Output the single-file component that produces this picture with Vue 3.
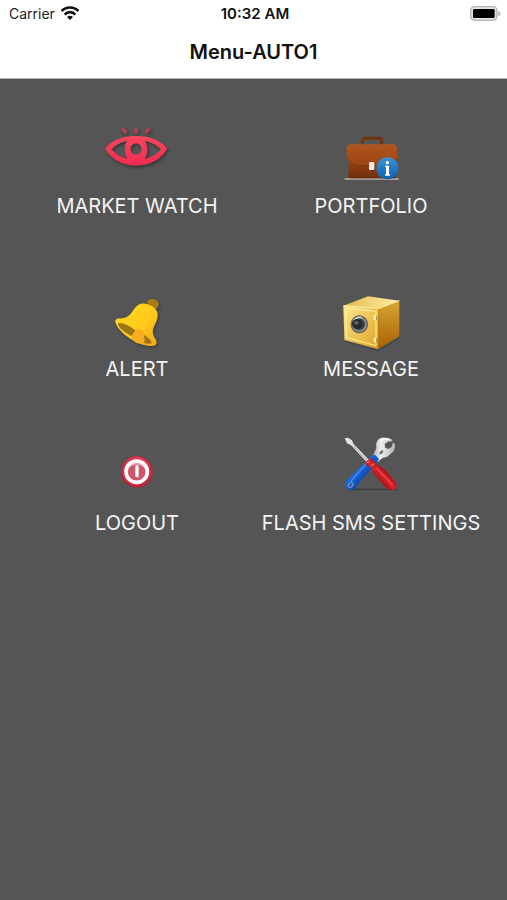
<template>
  <div class="screen">
    <header class="top-bar">
      <div class="status-bar">
        <div class="carrier">
          <span>Carrier</span>
          <svg class="wifi" viewBox="0 0 54 42" aria-hidden="true">
            <g fill="none" stroke="#111" stroke-width="8">
              <path d="M2 15 C15 1 39 1 52 15" />
              <path d="M11 26 C20 16 34 16 43 26" />
            </g>
            <path d="M18 33 Q27 25 36 33 L27 42 Z" fill="#111" />
          </svg>
        </div>
        <span class="clock">10:32 AM</span>
        <svg class="battery" viewBox="0 0 93 45" aria-hidden="true">
          <rect x="2" y="2" width="79" height="41" rx="12" fill="#e4e4e4" stroke="#b4b4b4" stroke-width="4" />
          <rect x="9" y="9" width="65" height="27" rx="4" fill="#000" />
          <path d="M85 15 Q92 18 92 23 Q92 28 85 31 Z" fill="#b4b4b4" />
        </svg>
      </div>
      <h1 class="title">{{ title }}</h1>
    </header>

    <main class="menu">
      <button v-for="item in items" :key="item.id" type="button" class="menu-item">
        <!-- eye -->
        <svg v-if="item.id === 'watch'" class="icon" viewBox="-3 15 252 216" aria-hidden="true">
          <defs>
            <linearGradient id="eye-red" x1="0" y1="0" x2="0" y2="1">
              <stop offset="0" stop-color="#fa465e" />
              <stop offset="1" stop-color="#f02b50" />
            </linearGradient>
            <filter id="eye-shadow" x="-20%" y="-20%" width="140%" height="150%">
              <feDropShadow dx="4" dy="6" stdDeviation="4" flood-color="#222" flood-opacity="0.6" />
            </filter>
          </defs>
          <g filter="url(#eye-shadow)">
            <path
              fill="url(#eye-red)"
              fill-rule="evenodd"
              d="M28 101 C44 77 78 63 120 63 C162 63 196 77 213 101 C196 133 160 151 120 151 C80 151 46 133 28 101 Z
                 M47 103 C57 117 73 127 94 132 C84 114 84 93 94 77 C74 81 57 90 47 103 Z
                 M146 77 C156 93 156 114 146 132 C167 127 185 117 195 103 C185 90 166 81 146 77 Z
                 M120 85 A17 17 0 1 0 120 119 A17 17 0 1 0 120 85 Z"
            />
            <g stroke="#cf3850" stroke-width="8">
              <path d="M79 39 L90 54" />
              <path d="M120 40 V55" />
              <path d="M160 39 L149 54" />
            </g>
          </g>
        </svg>

        <!-- briefcase with info badge -->
        <svg v-else-if="item.id === 'portfolio'" class="icon" viewBox="-4 -15 252 216" aria-hidden="true">
          <defs>
            <linearGradient id="case-body" x1="0" y1="0" x2="0" y2="1">
              <stop offset="0" stop-color="#9c4612" />
              <stop offset="1" stop-color="#702d0c" />
            </linearGradient>
            <linearGradient id="case-flap" x1="0" y1="0" x2="0" y2="1">
              <stop offset="0" stop-color="#b0561f" />
              <stop offset="1" stop-color="#9c4411" />
            </linearGradient>
            <linearGradient id="badge-blue" x1="0" y1="0" x2="0" y2="1">
              <stop offset="0" stop-color="#3a92d4" />
              <stop offset="1" stop-color="#0c61ad" />
            </linearGradient>
          </defs>
          <rect x="42" y="159" width="164" height="6" rx="3" fill="#a09c9a" />
          <path d="M97 60 V48 Q97 40 106 40 H144 Q154 40 154 48 V60" fill="none" stroke="#75330f" stroke-width="9" />
          <path d="M56 100 H196 V156 Q196 160 190 160 H60 Q54 160 54 154 Z" fill="url(#case-body)" />
          <path
            d="M62 58 H188 Q200 58 200 70 V100 Q196 118 174 121 H78 Q56 116 49 98 V70 Q50 58 62 58 Z"
            fill="url(#case-flap)"
          />
          <path d="M51 100 Q60 117 78 122 H174 Q194 118 199 102" fill="none" stroke="#803509" stroke-width="2" />
          <rect x="116" y="111" width="16" height="24" rx="3" fill="#f1e7e1" />
          <circle cx="171" cy="130" r="33" fill="url(#badge-blue)" />
          <circle cx="171" cy="113" r="5" fill="#fff" />
          <path d="M164 122 H176 V148 H179 V152 H164 V148 H167 V126 H164 Z" fill="#fff" />
        </svg>

        <!-- bell -->
        <svg v-else-if="item.id === 'alert'" class="icon" viewBox="-3 -15 252 216" aria-hidden="true">
          <defs>
            <linearGradient id="bell-gold" x1="0" y1="0" x2="1" y2="1">
              <stop offset="0" stop-color="#ffdc1c" />
              <stop offset="0.6" stop-color="#ffc91c" />
              <stop offset="1" stop-color="#f0a31c" />
            </linearGradient>
            <filter id="bell-shadow" x="-20%" y="-20%" width="140%" height="140%">
              <feDropShadow dx="3" dy="4" stdDeviation="4" flood-color="#222" flood-opacity="0.5" />
            </filter>
          </defs>
          <g filter="url(#bell-shadow)">
            <path d="M153 43 Q158 31 172 33 Q186 36 188 47 Q188 57 179 63 L158 55 Z" fill="#a87c12" />
            <path
              d="M58 97 C62 91 72 92 80 91 C99 89 106 75 116 61 C126 47 140 44 155 49 C176 56 188 69 184 89
                 C181 107 167 118 171 137 C173 149 184 156 181 167 C175 178 153 174 133 167 C104 157 57 123 58 97 Z"
              fill="url(#bell-gold)"
            />
            <path d="M66 106 C75 101 102 113 118 127 L111 146 C91 138 64 119 66 106 Z" fill="#9c7714" />
            <path d="M139 139 C153 145 166 157 167 165 C161 169 147 166 136 162 Z" fill="#997313" />
            <path
              d="M119 126 C130 118 145 127 144 140 C143 148 150 157 143 164 C134 171 114 164 108 152 C104 142 111 137 119 126 Z"
              fill="#f6ad20"
            />
          </g>
        </svg>

        <!-- safe -->
        <svg v-else-if="item.id === 'message'" class="icon" viewBox="-4 -15 252 216" aria-hidden="true">
          <defs>
            <linearGradient id="safe-front" x1="0" y1="0" x2="1" y2="1">
              <stop offset="0" stop-color="#ffe78d" />
              <stop offset="0.4" stop-color="#f1cc60" />
              <stop offset="1" stop-color="#e0a321" />
            </linearGradient>
            <linearGradient id="safe-side" x1="0" y1="0" x2="0" y2="1">
              <stop offset="0" stop-color="#d9a632" />
              <stop offset="1" stop-color="#a86105" />
            </linearGradient>
            <linearGradient id="safe-top" x1="0" y1="0" x2="1" y2="0">
              <stop offset="0" stop-color="#e3b949" />
              <stop offset="1" stop-color="#fff0a8" />
            </linearGradient>
            <radialGradient id="safe-dial" cx="0.5" cy="0.5" r="0.5">
              <stop offset="0" stop-color="#222629" />
              <stop offset="0.55" stop-color="#3b4042" />
              <stop offset="0.75" stop-color="#909596" />
              <stop offset="1" stop-color="#4c4a42" />
            </radialGradient>
          </defs>
          <path d="M42 158 L143 186 L208 146 V151 L144 190 L42 162 Z" fill="#333" opacity="0.4" />
          <path d="M39 53 L113 25 L207 38 L146 61 Z" fill="url(#safe-top)" />
          <path d="M146 61 L207 38 V145 L143 183 Z" fill="url(#safe-side)" />
          <path d="M39 53 L146 61 L143 183 L42 156 Z" fill="url(#safe-front)" />
          <path d="M47 61 L137 70 V173 L49 149 Z" fill="none" stroke="#fff0a2" stroke-width="3" />
          <path d="M39 53 L146 61 L207 38" fill="none" stroke="#fff0a3" stroke-width="3" />
          <path d="M146 63 L143 182" stroke="#b77e13" stroke-width="3" />
          <path d="M134 81 V96 M134 149 V163" stroke="#fff2af" stroke-width="8" />
          <path d="M139 83 V97 M139 151 V164" stroke="#98610a" stroke-width="2" />
          <ellipse cx="87" cy="109" rx="26" ry="27" fill="url(#safe-dial)" />
          <path d="M69 98 Q81 84 96 89" fill="none" stroke="#d5d5cb" stroke-width="4" />
          <circle cx="80" cy="108" r="15" fill="#262b2f" />
          <ellipse cx="78" cy="104" rx="7" ry="6" fill="#596065" />
        </svg>

        <!-- power -->
        <svg v-else-if="item.id === 'logout'" class="icon" viewBox="-3 -6 252 216" aria-hidden="true">
          <defs>
            <radialGradient id="power-red" cx="0.5" cy="0.45" r="0.55">
              <stop offset="0" stop-color="#e77882" />
              <stop offset="0.6" stop-color="#e0455a" />
              <stop offset="1" stop-color="#c4223a" />
            </radialGradient>
          </defs>
          <circle cx="123" cy="99" r="48" fill="#a9273a" opacity="0.8" />
          <circle cx="122" cy="97" r="45" fill="url(#power-red)" />
          <circle cx="122" cy="98" r="32" fill="#d0566a" stroke="#fff" stroke-width="11" />
          <path d="M94 90 Q122 66 150 90 Q146 70 122 69 Q98 70 94 90 Z" fill="#fff" opacity="0.4" />
          <path d="M123 84 V110" stroke="#fff" stroke-width="10" stroke-linecap="round" />
        </svg>

        <!-- screwdriver and wrench -->
        <svg v-else class="icon" viewBox="-4 24 252 216" aria-hidden="true">
          <defs>
            <linearGradient id="wrench-steel" x1="0" y1="0" x2="1" y2="0">
              <stop offset="0" stop-color="#a5a5a5" />
              <stop offset="0.4" stop-color="#f0f0f0" />
              <stop offset="1" stop-color="#b0b0b0" />
            </linearGradient>
            <linearGradient id="handle-blue" x1="0" y1="0" x2="1" y2="1">
              <stop offset="0.35" stop-color="#2070e0" />
              <stop offset="0.7" stop-color="#073fa9" />
            </linearGradient>
            <linearGradient id="handle-red" x1="0" y1="1" x2="1" y2="0">
              <stop offset="0.35" stop-color="#a80912" />
              <stop offset="0.5" stop-color="#d8262c" />
              <stop offset="0.65" stop-color="#b00c16" />
            </linearGradient>
          </defs>
          <path d="M55 181 H200" stroke="#2d2d2d" stroke-width="5" opacity="0.5" />
          <path
            d="M124 88 L138 58 Q134 38 147 29 Q162 21 184 31 L187 37 L172 38 L163 46 L165 56 L174 60 L184 54 L188 40
               L194 46 Q196 66 181 74 L171 83 L156 87 L143 98 Z"
            fill="url(#wrench-steel)"
          />
          <path d="M150 34 Q163 27 178 32" fill="none" stroke="#fff" stroke-width="4" />
          <ellipse cx="153" cy="70" rx="7" ry="4" fill="#666" transform="rotate(-45 153 70)" />
          <path
            d="M123 81 Q132 73 140 83 L146 91 L72 179 Q58 188 47 176 Q39 164 51 152 Z"
            fill="url(#handle-blue)"
          />
          <path d="M117 94 L62 156" stroke="#468fec" stroke-width="4" stroke-linecap="round" />
          <ellipse cx="61" cy="168" rx="9" ry="6" fill="#4d5970" stroke="#639eef" stroke-width="3" transform="rotate(-48 61 168)" />
          <path d="M43 28 L53 26 L65 34 L69 44 L116 93 L109 99 L62 49 L50 43 Z" fill="#e5e5e5" />
          <path d="M67 49 L112 96" stroke="#888" stroke-width="2" />
          <path
            d="M105 99 L119 89 Q126 87 130 96 L137 106 Q153 113 165 124 L195 158 Q205 173 191 182 Q177 187 165 174 L128 130 L121 113 L109 111 Z"
            fill="url(#handle-red)"
          />
          <path d="M139 117 L186 167" stroke="#e84a4c" stroke-width="4" stroke-linecap="round" />
          <path d="M108 102 L118 98 M121 111 L132 104" stroke="#fc8585" stroke-width="3" />
        </svg>

        <span class="label">{{ item.label }}</span>
      </button>
    </main>
  </div>
</template>

<script setup>
const title = 'Menu-AUTO1'

const items = [
  { id: 'watch', label: 'MARKET WATCH' },
  { id: 'portfolio', label: 'PORTFOLIO' },
  { id: 'alert', label: 'ALERT' },
  { id: 'message', label: 'MESSAGE' },
  { id: 'logout', label: 'LOGOUT' },
  { id: 'settings', label: 'FLASH SMS SETTINGS' }
]
</script>

<style>
body {
  background: #555;
}
</style>

<style scoped>
.screen {
  display: flex;
  flex-direction: column;
  min-height: 100vh;
  background: #555;
  font-family: Inter, "Liberation Sans", sans-serif;
}

.top-bar {
  background: #fff;
  border-bottom: 1px solid #b2b2b2;
}

.status-bar {
  display: grid;
  grid-template-columns: 1fr auto 1fr;
  align-items: center;
  height: 26px;
  padding: 0 6px 0 9px;
  font-size: 14px;
  color: #222;
}

.carrier {
  display: flex;
  align-items: center;
  gap: 6px;
}

.wifi {
  width: 18px;
  height: 14px;
}

.clock {
  font-size: 15px;
  font-weight: 600;
  color: #111;
}

.battery {
  justify-self: end;
  width: 31px;
  height: 15px;
}

.title {
  margin: 0;
  font-size: 20px;
  font-weight: 600;
  line-height: 52px;
  text-align: center;
  color: #111;
}

.menu {
  display: grid;
  grid-template-columns: 1fr 1fr;
  grid-template-rows: 163px 154px auto;
  align-items: start;
  padding: 41px 19px 0 20px;
}

.menu-item {
  display: flex;
  flex-direction: column;
  align-items: center;
  padding: 0;
  border: 0;
  background: none;
  font: inherit;
  color: #f4f4f4;
  cursor: pointer;
}

.icon {
  width: 84px;
  height: 72px;
  overflow: visible;
}

.label {
  font-size: 20px;
  line-height: 28px;
  white-space: nowrap;
}
</style>
